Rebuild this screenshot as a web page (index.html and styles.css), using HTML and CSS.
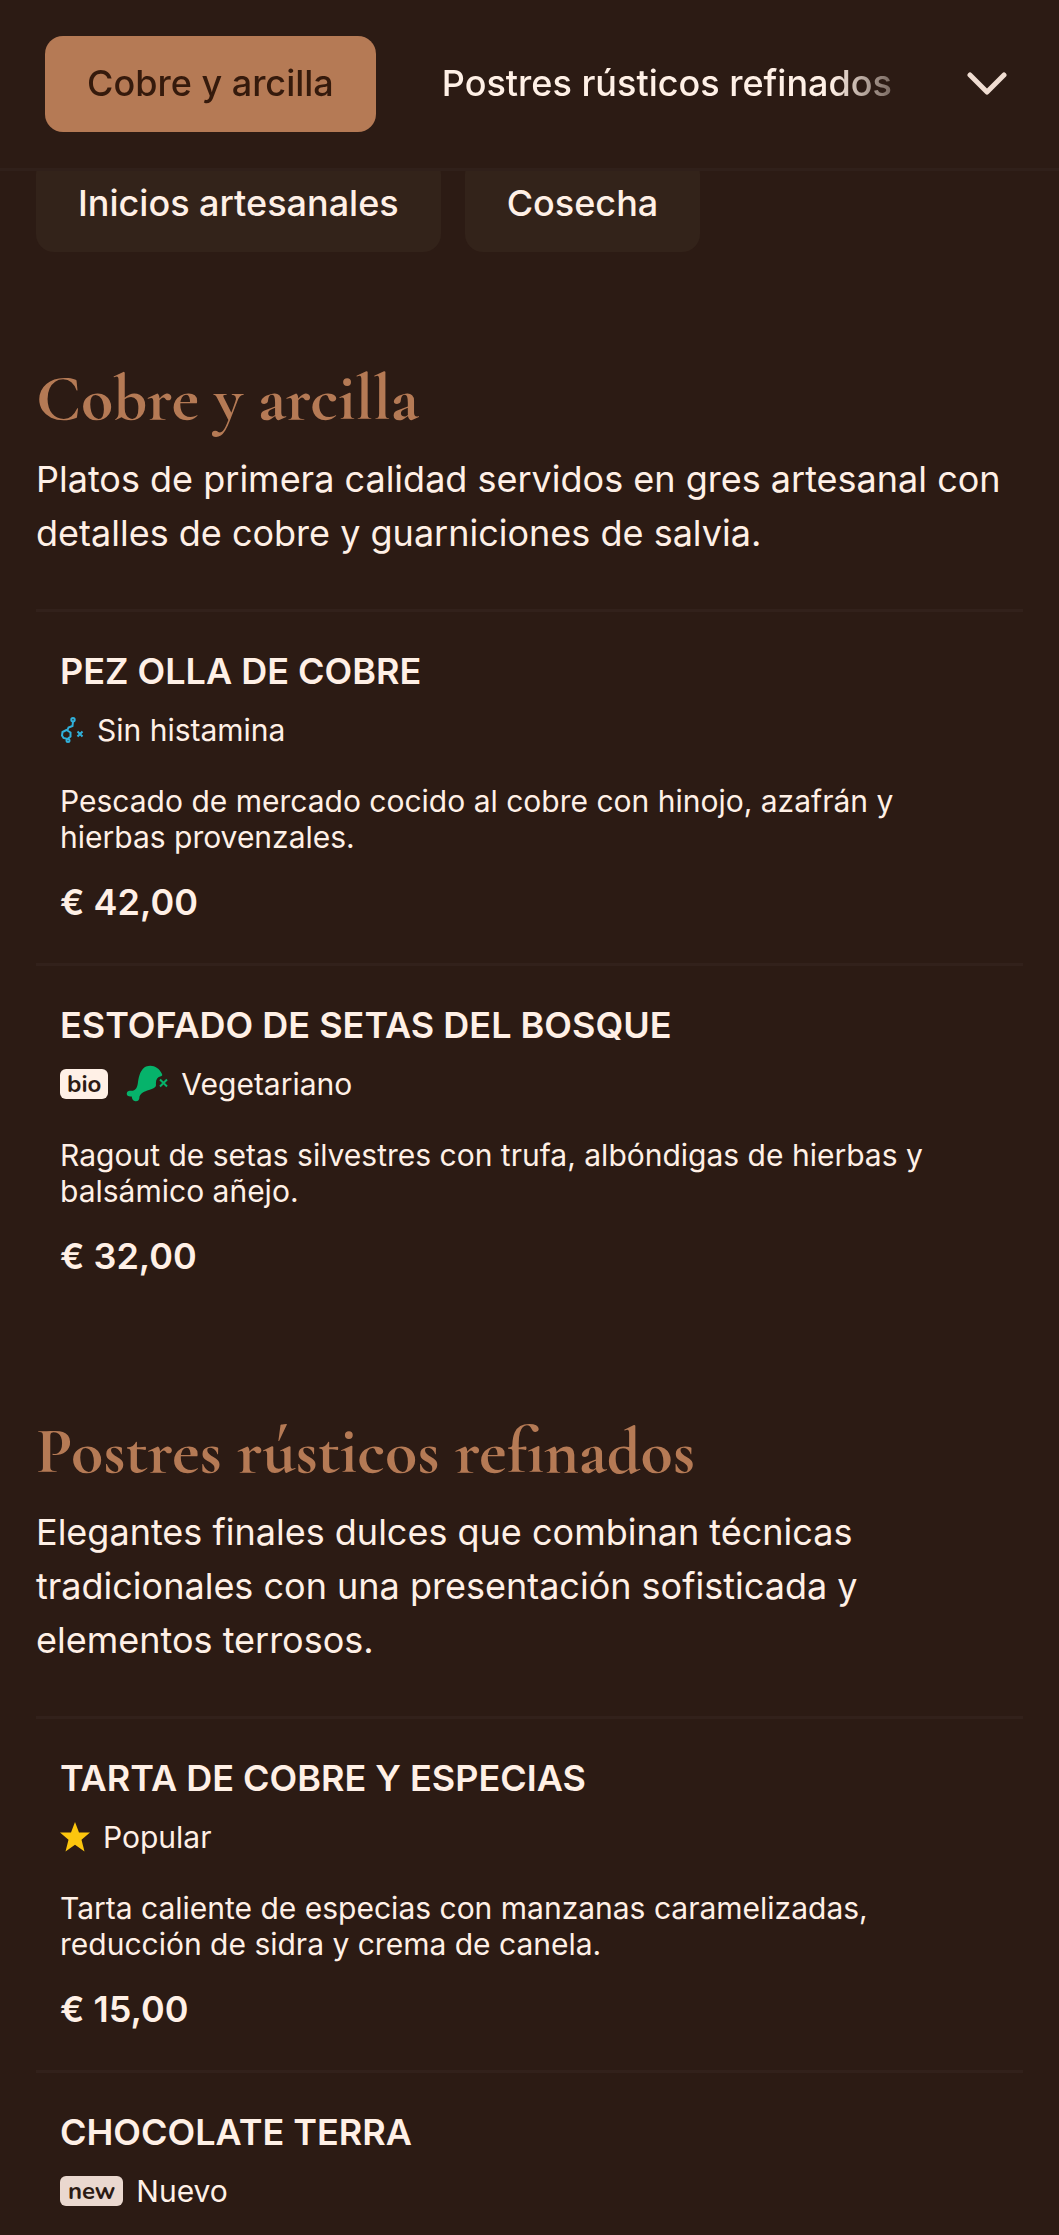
FILE: index.html
```html
<!DOCTYPE html>
<html lang="es">
<head>
<meta charset="utf-8">
<meta name="viewport" content="width=device-width, initial-scale=1">
<title>Menú</title>
<link rel="stylesheet" href="styles.css">
</head>
<body>
<header class="topbar">
  <nav class="tabs" aria-label="Secciones">
    <a class="tab tab-active" href="#cobre">Cobre y arcilla</a>
    <a class="tab" href="#postres">Postres rústicos refinados</a>
  </nav>
  <button class="expand" type="button" aria-label="Ver todas las secciones">
    <svg class="chevron" viewBox="0 0 40 24" aria-hidden="true"><path d="M3 3 20 20 37 3"/></svg>
  </button>
</header>
<main class="menu">
  <nav class="chips" aria-label="Categorías">
    <a class="chip" href="#inicios">Inicios artesanales</a>
    <a class="chip" href="#cosecha">Cosecha</a>
  </nav>

  <section class="section" id="cobre">
    <h2 class="section-title">Cobre y arcilla</h2>
    <p class="section-text">Platos de primera calidad servidos en gres artesanal con detalles de cobre y guarniciones de salvia.</p>
    <article class="item">
      <h3 class="item-name">PEZ OLLA DE COBRE</h3>
      <div class="tags">
        <svg class="icon-histamine" viewBox="0 0 24 26" aria-hidden="true">
          <path d="M13 4.500 12.500 9 8.500 10.500 7.500 13M6.500 13 10.500 15.500V19.500L7.500 22 3.500 21 2 18.500 2.500 15Z"/>
          <circle cx="13" cy="2.700" r="1.700"/><circle cx="8" cy="23.500" r="1.500"/>
          <path d="M17.500 14.500 22.500 19.500M22.500 14.500 17.500 19.500"/>
        </svg>
        <span>Sin histamina</span>
      </div>
      <p class="item-text">Pescado de mercado cocido al cobre con hinojo, azafrán y hierbas provenzales.</p>
      <p class="price">€ 42,00</p>
    </article>
    <article class="item">
      <h3 class="item-name">ESTOFADO DE SETAS DEL BOSQUE</h3>
      <div class="tags">
        <span class="badge badge-bio">bio</span>
        <svg class="icon-leg" viewBox="0 0 42 38" aria-hidden="true">
          <path class="leg" d="M12 17C13 10 15 4 20 1.500C26-1 33 2 36 9C36.500 10.500 36 11 35 11.200C31 12 29.500 15 30 20C30 22.500 27 23.500 23 25C18 26.500 15 28 13.500 31.500C13.500 35 12 36.500 9.500 36.300C7 36 6 34 5.700 31.500C2 32 0 30 1 27.500C2 25 5 26 7.500 25.500C10.500 24.500 11.500 21 12 17Z"/>
          <path class="cross" d="M34 14.500 41 21.500M41 14.500 34 21.500"/>
        </svg>
        <span>Vegetariano</span>
      </div>
      <p class="item-text">Ragout de setas silvestres con trufa, albóndigas de hierbas y balsámico añejo.</p>
      <p class="price">€ 32,00</p>
    </article>
  </section>

  <section class="section" id="postres">
    <h2 class="section-title">Postres rústicos refinados</h2>
    <p class="section-text">Elegantes finales dulces que combinan técnicas tradicionales con una presentación sofisticada y elementos terrosos.</p>
    <article class="item">
      <h3 class="item-name">TARTA DE COBRE Y ESPECIAS</h3>
      <div class="tags">
        <svg class="icon-star" viewBox="0 0 30 30" aria-hidden="true"><path d="M15 0 19 10.500H30L21.500 17.700 24.500 29.500 15 22.800 5.500 29.500 8.500 17.700 0 10.500H11Z"/></svg>
        <span>Popular</span>
      </div>
      <p class="item-text">Tarta caliente de especias con manzanas caramelizadas, reducción de sidra y crema de canela.</p>
      <p class="price">€ 15,00</p>
    </article>
    <article class="item">
      <h3 class="item-name">CHOCOLATE TERRA</h3>
      <div class="tags">
        <span class="badge badge-new">new</span>
        <span>Nuevo</span>
      </div>
    </article>
  </section>
</main>
</body>
</html>
```
FILE: styles.css
```css
:root {
  --bg: #2c1b14;
  --surface: #33231a;
  --text: #fff0e6;
  --accent: #b57a55;
}

* {
  box-sizing: border-box;
}

body {
  margin: 0;
  background: var(--bg);
  color: var(--text);
  font-family: Inter, "Liberation Sans", sans-serif;
  font-size: 36px;
  line-height: 48px;
}

h2,
h3,
p {
  margin: 0;
}

a {
  color: inherit;
  text-decoration: none;
}

.topbar {
  position: sticky;
  top: 0;
  z-index: 1;
  display: flex;
  align-items: center;
  gap: 24px;
  padding: 36px 36px 36px 45px;
  border-bottom: 3px solid #30201a;
  background: var(--bg);
}

.tabs {
  display: flex;
  flex: 1;
  gap: 24px;
  min-width: 0;
  overflow: hidden;
  mask-image: linear-gradient(to right, #000 calc(100% - 96px), transparent);
}

.tab,
.chip {
  flex: none;
  padding: 23px 42px 25px;
  border-radius: 18px;
  font-weight: 500;
  white-space: nowrap;
}

.tab-active {
  background: var(--accent);
  color: #351a0c;
}

.expand {
  display: flex;
  align-items: center;
  justify-content: center;
  width: 72px;
  height: 72px;
  padding: 0;
  border: 0;
  background: none;
  color: #f0ddd2;
}

.chevron {
  width: 40px;
  height: 24px;
  fill: none;
  stroke: currentColor;
  stroke-width: 5;
  stroke-linecap: round;
  stroke-linejoin: round;
}

.menu {
  padding: 0 36px;
}

.chips {
  display: flex;
  gap: 24px;
  margin: -15px 0 12px;
}

.chip {
  background: var(--surface);
}

.section {
  padding-top: 96px;
}

.section-title {
  color: var(--accent);
  font-family: "Cormorant Garamond", Cormorant, "Liberation Serif", serif;
  font-size: 66px;
  font-weight: 700;
  line-height: 76px;
}

.section-text {
  padding: 16px 0 49px;
  line-height: 54px;
}

.item {
  padding: 35px 24px 37px;
  border-top: 3px solid #32211b;
}

.item-name {
  font-size: 36px;
  font-weight: 600;
}

.tags {
  display: flex;
  align-items: center;
  gap: 13px;
  margin-top: 17px;
  font-size: 30px;
  line-height: 36px;
}

.badge {
  padding: 0 7px;
  border-radius: 6px;
  color: var(--bg);
  font-family: Nunito, "Noto Sans", sans-serif;
  font-size: 24px;
  font-weight: 700;
  line-height: 30px;
}

.badge-bio {
  margin-right: 5px;
  background: var(--text);
}

.badge-new {
  padding: 0 8px;
  background: #ead8cf;
}

.icon-histamine {
  width: 24px;
  height: 26px;
  fill: none;
  stroke: #30b0da;
  stroke-width: 2;
}

.icon-leg {
  width: 42px;
  height: 38px;
  margin: -1px 0;
}

.leg {
  fill: #06b36b;
}

.cross {
  stroke: #06b36b;
  stroke-width: 2;
}

.icon-star {
  width: 30px;
  height: 30px;
  fill: #fcc60e;
}

.item-text {
  margin-top: 35px;
  font-size: 30px;
  line-height: 36px;
}

.price {
  margin-top: 23px;
  font-weight: 600;
}
```
